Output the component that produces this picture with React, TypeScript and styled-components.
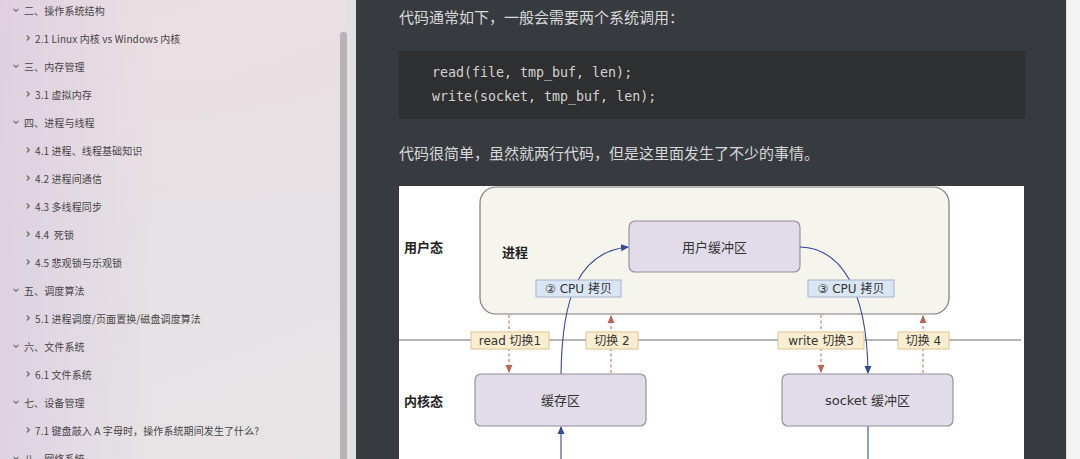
import React from "react";
import styled, { createGlobalStyle } from "styled-components";

const GlobalStyle = createGlobalStyle`
  html, body { margin: 0; padding: 0; overflow: hidden; }
  body { font-family: "Noto Sans CJK SC", "Noto Sans", sans-serif; }
`;

const Page = styled.div`
  display: flex;
  width: 1080px;
  height: 459px;
  overflow: hidden;
`;

const Sidebar = styled.aside`
  display: flex;
  width: 356px;
  flex-shrink: 0;
  background: linear-gradient(160deg, #eadfe2 0%, #e6e1e4 45%, #e7e4e6 100%);
`;

const SidebarTint = styled.div`
  flex: 1;
  overflow: hidden;
  background: linear-gradient(90deg, rgba(214, 196, 224, 0.55) 0%, rgba(214, 196, 224, 0) 45%),
    linear-gradient(180deg, rgba(236, 222, 226, 0.6) 0%, rgba(236, 222, 226, 0) 50%);
`;

const NavList = styled.ul`
  list-style: none;
  margin: -4px 0 0;
  padding: 0;
`;

const NavItem = styled.li<{ $sub?: boolean }>`
  display: flex;
  align-items: center;
  height: 28px;
  padding-left: ${(p) => (p.$sub ? "25px" : "12px")};
  gap: 4px;
  font-size: 10px;
  color: #474446;
  white-space: pre;
  letter-spacing: 0.1px;
`;

const ScrollTrack = styled.div`
  width: 16px;
  display: flex;
  flex-shrink: 0;
`;

const ScrollThumbCol = styled.div`
  width: 7px;
  padding-top: 32px;
  display: flex;
`;

const ScrollThumb = styled.div`
  flex: 1;
  background: #b7b2b5;
  border-radius: 3px 3px 0 0;
`;

const ScrollGap = styled.div`
  flex: 1;
  background: #e3e0e2;
`;

const Main = styled.main`
  flex: 1;
  background: #373b3f;
  padding: 5px 0 0 43px;
  display: flex;
  flex-direction: column;
`;

const Paragraph = styled.p<{ $mt?: number }>`
  margin: ${(p) => p.$mt ?? 0}px 0 0;
  width: 626px;
  font-size: 15px;
  line-height: 24px;
  color: #d8d8d8;
`;

const CodeBlock = styled.pre`
  margin: 22px 0 0;
  width: 626px;
  box-sizing: border-box;
  padding: 10px 33px;
  background: #2e2f31;
  font-family: "DejaVu Sans Mono", "Liberation Mono", monospace;
  font-size: 13.3px;
  line-height: 24px;
  color: #d3d3d3;
`;

const Figure = styled.div`
  margin-top: 21px;
  width: 625px;
  height: 300px;
  background: #ffffff;
`;

const RightEdge = styled.div`
  width: 13px;
  flex-shrink: 0;
  background: #f3f3f3;
  border-left: 1px solid #e0e0e0;
`;

const ChevronDown = () => (
  <svg width="8" height="8" viewBox="0 0 8 8">
    <path d="M1.5 2.8 L4 5.3 L6.5 2.8" fill="none" stroke="#6a6668" strokeWidth="1.1" />
  </svg>
);

const ChevronRight = () => (
  <svg width="6" height="8" viewBox="0 0 6 8">
    <path d="M1.8 1.5 L4.3 4 L1.8 6.5" fill="none" stroke="#6a6668" strokeWidth="1.1" />
  </svg>
);

const nav: { t: string; sub?: boolean }[] = [
  { t: "二、操作系统结构" },
  { t: "2.1 Linux 内核 vs Windows 内核", sub: true },
  { t: "三、内存管理" },
  { t: "3.1 虚拟内存", sub: true },
  { t: "四、进程与线程" },
  { t: "4.1 进程、线程基础知识", sub: true },
  { t: "4.2 进程间通信", sub: true },
  { t: "4.3 多线程同步", sub: true },
  { t: "4.4  死锁", sub: true },
  { t: "4.5 悲观锁与乐观锁", sub: true },
  { t: "五、调度算法" },
  { t: "5.1 进程调度/页面置换/磁盘调度算法", sub: true },
  { t: "六、文件系统" },
  { t: "6.1 文件系统", sub: true },
  { t: "七、设备管理" },
  { t: "7.1 键盘敲入 A 字母时，操作系统期间发生了什么?", sub: true },
  { t: "八、网络系统" },
];

const FONT = "'DejaVu Sans', 'Noto Sans CJK SC', sans-serif";
const BLUE = "#34489a";
const RED = "#b8664f";

const Diagram = () => (
  <svg width="625" height="300" viewBox="0 0 625 300">
    <defs>
      <marker id="ab" markerWidth="8" markerHeight="8" refX="7" refY="4" orient="auto" markerUnits="userSpaceOnUse">
        <path d="M0 0.5 L8 4 L0 7.5 Z" fill={BLUE} />
      </marker>
      <marker id="ar" markerWidth="8" markerHeight="8" refX="7" refY="4" orient="auto" markerUnits="userSpaceOnUse">
        <path d="M0 0.5 L8 4 L0 7.5 Z" fill={RED} />
      </marker>
    </defs>
    <rect x="81" y="1" width="469" height="127" rx="16" fill="#f6f5ed" stroke="#7d7b78" strokeWidth="1.2" />
    <text x="5" y="66" fontFamily={FONT} fontWeight="700" fontSize="13" fill="#222">用户态</text>
    <text x="103" y="71" fontFamily={FONT} fontWeight="700" fontSize="13" fill="#222">进程</text>
    <rect x="230" y="35" width="171" height="51" rx="6" fill="#e2dcea" stroke="#8f8c94" strokeWidth="1.1" />
    <text x="315.5" y="65.5" textAnchor="middle" fontFamily={FONT} fontSize="13" fill="#333">用户缓冲区</text>

    <line x1="0" y1="154" x2="622" y2="154" stroke="#6f6f6f" strokeWidth="1.2" />

    <line x1="110" y1="129" x2="110" y2="186" stroke={RED} strokeWidth="1" strokeDasharray="3 2.5" markerEnd="url(#ar)" />
    <line x1="212" y1="187" x2="212" y2="130" stroke={RED} strokeWidth="1" strokeDasharray="3 2.5" markerEnd="url(#ar)" />
    <line x1="422" y1="129" x2="422" y2="186" stroke={RED} strokeWidth="1" strokeDasharray="3 2.5" markerEnd="url(#ar)" />
    <line x1="524" y1="187" x2="524" y2="130" stroke={RED} strokeWidth="1" strokeDasharray="3 2.5" markerEnd="url(#ar)" />

    <path d="M162 188 C 163 110, 180 66, 229 61" fill="none" stroke={BLUE} strokeWidth="1.1" markerEnd="url(#ab)" />
    <path d="M401 61 C 440 62, 468 100, 469 187" fill="none" stroke={BLUE} strokeWidth="1.1" markerEnd="url(#ab)" />
    <line x1="162" y1="300" x2="162" y2="241" stroke={BLUE} strokeWidth="1.1" markerEnd="url(#ab)" />
    <line x1="469" y1="240" x2="469" y2="300" stroke={BLUE} strokeWidth="1.1" />

    <rect x="137" y="94" width="85" height="17" fill="#dbe6f4" stroke="#9fb2cc" strokeWidth="1" />
    <text x="179.5" y="107" textAnchor="middle" fontFamily={FONT} fontSize="12" fill="#333">② CPU 拷贝</text>
    <rect x="409" y="94" width="86" height="17" fill="#dbe6f4" stroke="#9fb2cc" strokeWidth="1" />
    <text x="452" y="107" textAnchor="middle" fontFamily={FONT} fontSize="12" fill="#333">③ CPU 拷贝</text>

    <rect x="72" y="146" width="78" height="17" fill="#faedd0" stroke="#e0c48e" strokeWidth="1" />
    <text x="111" y="159" textAnchor="middle" fontFamily={FONT} fontSize="12" fill="#333">read 切换1</text>
    <rect x="187" y="146" width="52" height="17" fill="#faedd0" stroke="#e0c48e" strokeWidth="1" />
    <text x="213" y="159" textAnchor="middle" fontFamily={FONT} fontSize="12" fill="#333">切换 2</text>
    <rect x="379" y="146" width="86" height="17" fill="#faedd0" stroke="#e0c48e" strokeWidth="1" />
    <text x="422" y="159" textAnchor="middle" fontFamily={FONT} fontSize="12" fill="#333">write 切换3</text>
    <rect x="499" y="146" width="51" height="17" fill="#faedd0" stroke="#e0c48e" strokeWidth="1" />
    <text x="524.5" y="159" textAnchor="middle" fontFamily={FONT} fontSize="12" fill="#333">切换 4</text>

    <text x="5" y="220" fontFamily={FONT} fontWeight="700" fontSize="13" fill="#222">内核态</text>
    <rect x="76" y="188" width="171" height="52" rx="6" fill="#e2dcea" stroke="#8f8c94" strokeWidth="1.1" />
    <text x="161.5" y="218.5" textAnchor="middle" fontFamily={FONT} fontSize="13" fill="#333">缓存区</text>
    <rect x="383" y="188" width="171" height="52" rx="6" fill="#e2dcea" stroke="#8f8c94" strokeWidth="1.1" />
    <text x="468.5" y="218.5" textAnchor="middle" fontFamily={FONT} fontSize="13" fill="#333">socket 缓冲区</text>
  </svg>
);

export default function App() {
  return (
    <>
      <GlobalStyle />
      <Page>
        <Sidebar>
          <SidebarTint>
            <NavList>
              {nav.map((n, i) => (
                <NavItem key={i} $sub={n.sub}>
                  {n.sub ? <ChevronRight /> : <ChevronDown />}
                  <span>{n.t}</span>
                </NavItem>
              ))}
            </NavList>
          </SidebarTint>
          <ScrollTrack>
            <ScrollThumbCol>
              <ScrollThumb />
            </ScrollThumbCol>
            <ScrollGap />
          </ScrollTrack>
        </Sidebar>
        <Main>
          <Paragraph>代码通常如下，一般会需要两个系统调用：</Paragraph>
          <CodeBlock>
            {"read(file, tmp_buf, len);\nwrite(socket, tmp_buf, len);"}
          </CodeBlock>
          <Paragraph $mt={22}>代码很简单，虽然就两行代码，但是这里面发生了不少的事情。</Paragraph>
          <Figure>
            <Diagram />
          </Figure>
        </Main>
        <RightEdge />
      </Page>
    </>
  );
}
